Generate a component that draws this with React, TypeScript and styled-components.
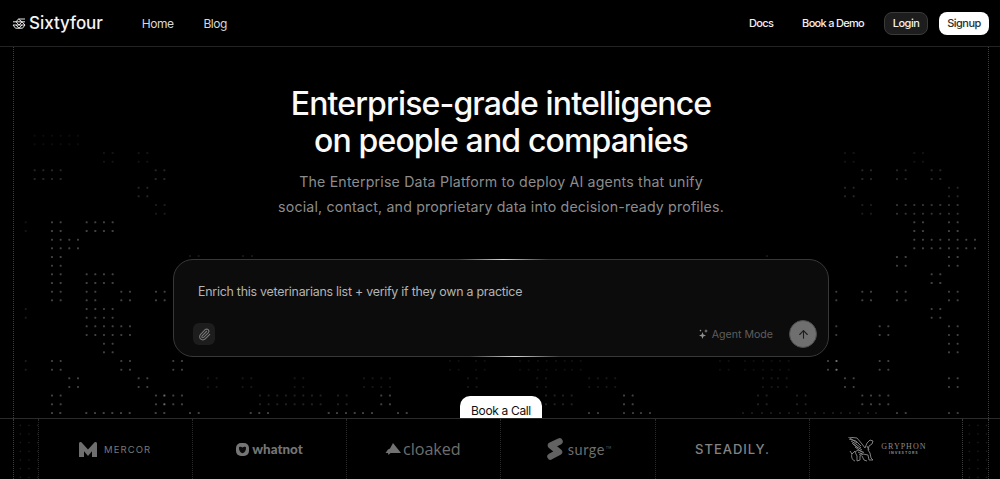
import React from "react";
import styled, { createGlobalStyle } from "styled-components";
import { Paperclip, ArrowUp } from "lucide-react";

const Global = createGlobalStyle`
  html, body { margin: 0; padding: 0; background: #000; height: 100%; overflow: hidden; }
  * { box-sizing: border-box; }
  #root { height: 100%; }
`;

const Page = styled.div`
  position: relative;
  width: 1000px;
  height: 479px;
  display: flex;
  flex-direction: column;
  overflow: hidden;
  background: #000;
  color: #fff;
  font-family: Inter, "Liberation Sans", sans-serif;
`;

const Nav = styled.header`
  position: relative;
  z-index: 1;
  flex: none;
  height: 47px;
  display: flex;
  align-items: center;
  justify-content: space-between;
  padding: 0 11px 0 12px;
  border-bottom: 1px solid #232323;
`;
const NavGroup = styled.div<{ $gap: number }>`
  display: flex;
  align-items: center;
  gap: ${(p) => p.$gap}px;
`;
const Brand = styled.a`
  display: flex;
  align-items: center;
  gap: 3px;
  margin-right: 9px;
  font-size: 17px;
  font-weight: 500;
  letter-spacing: -0.05px;
  color: #f4f4f4;
`;
const NavLink = styled.a<{ $strong?: boolean }>`
  font-size: ${(p) => (p.$strong ? "11px" : "12px")};
  font-weight: ${(p) => (p.$strong ? 500 : 400)};
  letter-spacing: ${(p) => (p.$strong ? "-0.7px" : "-0.5px")};
  color: ${(p) => (p.$strong ? "#f0f0f0" : "#d8d8d8")};
`;
const LoginButton = styled.button`
  width: 44px;
  height: 23px;
  margin-left: -9px;
  padding: 0;
  border: 1px solid #3a3a3a;
  border-radius: 8px;
  background: #1d1d1d;
  color: #f2f2f2;
  font: 500 11px Inter, sans-serif;
  letter-spacing: -0.5px;
`;
const SignupButton = styled.button`
  width: 50px;
  height: 23px;
  margin-left: -18px;
  padding: 0;
  border: 0;
  border-radius: 8px;
  background: #fff;
  color: #2e2e2e;
  font: 500 11px Inter, sans-serif;
  letter-spacing: -0.5px;
`;

const DotMap = styled.svg`
  position: absolute;
  inset: 0;
  pointer-events: none;
`;

const Hero = styled.main`
  position: relative;
  z-index: 1;
  flex: 1;
  min-height: 0;
  margin: 0 11px 0 13px;
  padding-top: 38px;
  display: flex;
  flex-direction: column;
  align-items: center;
  overflow: hidden;
  border-left: 1px dotted #3d3d3d;
  border-right: 1px dotted #3d3d3d;
`;
const Title = styled.h1`
  margin: 0;
  font-size: 32px;
  line-height: 37px;
  font-weight: 500;
  letter-spacing: -0.86px;
  text-align: center;
  color: #fafafa;
`;
const Subtitle = styled.p`
  margin: 10px 0 0;
  font-size: 14.2px;
  line-height: 25px;
  letter-spacing: 0.17px;
  text-align: center;
  color: #8c8c8c;
`;
const PromptCard = styled.section`
  position: relative;
  flex: none;
  width: 656px;
  height: 98px;
  margin-top: 40px;
  padding: 23px 11px 8px 19px;
  display: flex;
  flex-direction: column;
  justify-content: space-between;
  border: 1px solid #383838;
  border-radius: 20px;
  background: #0c0c0c;
  &::before, &::after {
    content: "";
    position: absolute;
    height: 1px;
    width: 90px;
    background: linear-gradient(90deg, transparent, #d8d8d8, transparent);
  }
  &::before { top: -1px; left: 284px; }
  &::after { bottom: -1px; left: 296px; }
`;
const PromptText = styled.div`
  padding-left: 5px;
  font-size: 12.4px;
  line-height: 18px;
  letter-spacing: -0.24px;
  color: #b4b4b4;
`;
const PromptFooter = styled.div`
  display: flex;
  align-items: center;
  justify-content: space-between;
`;
const AttachButton = styled.button`
  width: 22px;
  height: 22px;
  padding: 0;
  display: grid;
  place-items: center;
  border: 0;
  border-radius: 6px;
  background: #1d1d1d;
  color: #777;
`;
const ModeGroup = styled.div`
  display: flex;
  align-items: center;
`;
const AgentMode = styled.span`
  display: flex;
  align-items: center;
  gap: 4px;
  margin-right: 16px;
  font-size: 10.6px;
  color: #5e5e5e;
`;
const SendButton = styled.button`
  width: 28px;
  height: 28px;
  padding: 0;
  display: grid;
  place-items: center;
  border: 1px solid #4c4c4c;
  border-radius: 50%;
  background: #6f6f6f;
  color: #1c1c1c;
`;
const CallButton = styled.button`
  flex: none;
  width: 82px;
  height: 34px;
  margin-top: 39px;
  padding: 0 0 6px;
  border: 0;
  border-radius: 10px;
  background: #fff;
  color: #111;
  font: 400 12px Inter, sans-serif;
  letter-spacing: -0.35px;
`;

const LogoStrip = styled.section`
  position: relative;
  z-index: 1;
  flex: none;
  height: 61px;
  padding: 0 11px 0 13px;
  display: grid;
  grid-template-columns: 24.5px repeat(6, 1fr) 25.5px;
  border-top: 1px solid #2b2b2b;
`;
const CornerCell = styled.div<{ $side: "left" | "right" }>`
  background-image: radial-gradient(circle, #262626 0.7px, transparent 1px);
  background-size: 8.67px 8.67px;
  background-position: 2px 2px;
  border-${(p) => p.$side}: 1px dotted #3d3d3d;
`;
const LogoCell = styled.div`
  display: flex;
  align-items: center;
  justify-content: center;
  border-left: 1px dotted #2a2a2a;
  color: #717171;
  &:nth-last-child(2) { border-right: 1px dotted #3d3d3d; }
`;
const LogoRow = styled.div<{ $gap: number; $shift?: number }>`
  display: flex;
  align-items: center;
  gap: ${(p) => p.$gap}px;
  transform: translateX(${(p) => p.$shift ?? 0}px);
`;
const MercorName = styled.span`
  font-size: 9.5px;
  letter-spacing: 1.1px;
  font-weight: 400;
  color: #787878;
`;
const WhatnotName = styled.span`
  font-family: Lato, sans-serif;
  font-size: 13.4px;
  font-weight: 900;
  color: #757575;
`;
const CloakedName = styled.span`
  font-family: "Open Sans", sans-serif;
  font-size: 16.2px;
  font-weight: 400;
  letter-spacing: -0.05px;
  color: #6e6e6e;
`;
const SurgeName = styled.span`
  font-family: Lato, sans-serif;
  font-size: 14.5px;
  letter-spacing: 0.5px;
  color: #6e6e6e;
`;
const SurgeMark = styled.sup`
  font-size: 3px;
  margin-left: 1px;
`;
const SteadilyName = styled.span`
  font-size: 13px;
  font-weight: 500;
  letter-spacing: 1px;
  color: #838383;
`;
const GryphonText = styled.div`
  display: flex;
  flex-direction: column;
  align-items: center;
  font-family: "Liberation Serif", serif;
  color: #8a8a8a;
`;
const GryphonName = styled.span`
  font-size: 8px;
  letter-spacing: 1px;
  line-height: 9px;
`;
const GryphonSub = styled.span`
  font-family: Inter, sans-serif;
  font-size: 3.6px;
  font-weight: 700;
  letter-spacing: 1px;
  line-height: 5px;
`;

const DOT_STEP = 8.67;
const rowY = (r: number) => 135.67 + 17.33 * r;
const c = (...n: number[]) => n.map((v) => v * 17.33);
const rr = (...n: number[]) => n.map((v) => 845 + v * 17.33);
type Cluster = [row: number, opacity: number, xs: number[]];

const clusters: Cluster[] = [
  [0, 0.05, c(2, 3, 4)],
  [1, 0.08, [...c(6, 8), ...rr(0, 4)]],
  [2, 0.15, [...c(2, 3), 155.7, ...rr(1, 3, 5)]],
  [3, 0.15, [...c(8), ...rr(0, 6)]],
  [4, 0.11, [...c(9), ...rr(1)]],
  [4, 0.2, rr(3, 4, 5, 6)],
  [5, 0.26, [...c(3, 5, 6), ...rr(4, 6)]],
  [6, 0.26, [...c(3, 4), ...rr(4, 5, 6, 7)]],
  [7, 0.26, [...c(3), ...rr(3, 6)]],
  [8, 0.26, [...c(3, 5, 6), ...rr(5)]],
  [9, 0.26, [...c(3, 5, 7, 9), ...rr(1, 3, 6)]],
  [10, 0.26, [...c(5, 6), ...rr(5)]],
  [11, 0.26, [...c(5, 6, 7), ...rr(2, 6)]],
  [12, 0.26, [...c(6), ...rr(6)]],
  [13, 0.26, [...c(3, 7, 10), ...rr(2), 828]],
  [13, 0.06, [450, 476, 520, 538, 556, 572, 720, 745, 763, 780]],
  [14, 0.26, [...c(4, 8), ...rr(0, 6)]],
  [14, 0.09, [...c(12, 14, 17, 21, 22, 27, 31, 34, 35), 763, 778]],
  [15, 0.26, [...c(3, 9, 10, 22), ...rr(1, 2), 624]],
  [15, 0.13, [...c(15, 16, 17, 18), 338, 546, 563, 758, 797]],
];
const singles: [x: number, y: number, o: number][] = [
  [836.3, rowY(9), 0.24],
  [836.3, rowY(9) + DOT_STEP, 0.24],
  [836.3, rowY(11), 0.24],
  [836.3, rowY(11) + DOT_STEP, 0.24],
  [836.3, rowY(13), 0.24],
  [836.3, rowY(13) + DOT_STEP, 0.24],
  [25.7, rowY(5), 0.08],
  [25.7, rowY(5) + DOT_STEP, 0.08],
  [25.7, rowY(10), 0.11],
  [25.7, rowY(10) + DOT_STEP, 0.11],
  [25.7, rowY(13), 0.11],
  [25.7, rowY(13) + DOT_STEP, 0.11],
  [164, rowY(15), 0.2],
  [164, rowY(15) + DOT_STEP, 0.2],
  ...[52, 60.3, 86.3, 95, 103.7, 112.3, 121, 129.7, 155.7, 164.3, 190, 198.7, 250.7, 259.3, 268, 328.7, 337, 346, 354.7, 363, 372, 398, 406.7].map(
    (x) => [x, 413, 0.26] as [number, number, number]
  ),
  ...[589, 598, 624, 633, 641, 650, 897, 905.7, 949, 957.7].map((x) => [x, 413, 0.24] as [number, number, number]),
  ...[743, 752, 762, 771, 780, 789, 798, 806, 815, 824, 833, 841, 850, 859, 868, 876].map(
    (x) => [x, 413, 0.1] as [number, number, number]
  ),
  [190, 256, 0.09],
  [198.7, 256, 0.09],
  [243, 256, 0.09],
  [252, 256, 0.09],
  [767, 256, 0.09],
];

function BackgroundDots() {
  const dots: [number, number, number][] = [...singles];
  clusters.forEach(([row, o, xs]) =>
    xs.forEach((x) => {
      const y = rowY(row);
      dots.push([x, y, o], [x + DOT_STEP, y, o], [x, y + DOT_STEP, o], [x + DOT_STEP, y + DOT_STEP, o]);
    })
  );
  return (
    <DotMap width={1000} height={479} viewBox="0 0 1000 479">
      {dots.map(([x, y, o], i) => (
        <rect key={i} x={x - 1} y={y - 1} width={2} height={2} rx={0.6} fill="#fff" opacity={o} />
      ))}
    </DotMap>
  );
}

const BrandMark = () => (
  <svg width="14" height="11" viewBox="0 0 14 11" fill="none" stroke="#e8e8e8" strokeWidth="1">
    <path d="M4 3.800 6.500 1H13M1 3.800h12M1 7h12M1 7l2.500 3.200h7L13 7M4 3.800 7 7l3-3.200L13 7M6.500 1 10 3.800M4 7l3 3.200L10 7" />
  </svg>
);
const SparkleIcon = () => (
  <svg width="9" height="10" viewBox="0 0 9 10" fill="#8f8f8f">
    <path d="M3.500 3 4.400 5.600 7 6.500 4.400 7.400 3.500 10 2.600 7.400 0 6.500 2.600 5.600Z" />
    <path d="M7 0 7.500 1.500 9 2 7.500 2.500 7 4 6.500 2.500 5 2 6.500 1.500Z" />
    <circle cx="1.500" cy="1.600" r="0.8" />
  </svg>
);
const MercorMark = () => (
  <svg width="18" height="15" viewBox="0 0 18 15" fill="#6e6e6e">
    <path d="M0 1.500C0 .6.600 0 1.500 0c.7 0 1.200.3 1.600.9L9 7.500 14.900.9c.4-.6.900-.9 1.600-.9.900 0 1.500.6 1.500 1.500V15h-5V9.200L9 14 5 9.200V15H0Z" />
  </svg>
);
const WhatnotMark = () => (
  <svg width="13" height="13" viewBox="0 0 13 13">
    <rect width="13" height="13" rx="5" fill="#757575" />
    <path d="M3 4.200c1.200-.7 2.300-.5 3.500.2 1.200-.7 2.300-.9 3.500-.2.300 2.600-1 5.300-3.500 6.100C4 9.500 2.700 6.800 3 4.200Z" fill="#0a0a0a" />
  </svg>
);
const CloakedMark = () => (
  <svg width="16" height="12" viewBox="0 0 16 12" fill="#717171">
    <path d="M8 0 16 10H5.500L3.500 12 3 10H0.500L3 6.500 5 5.500Z" />
  </svg>
);
const SurgeLogoMark = () => (
  <svg width="16" height="22" viewBox="0 0 16 22" fill="none" stroke="#626262" strokeWidth="6.500" strokeLinecap="round" strokeLinejoin="round">
    <path d="M12.500 3.500 4 7.500 12 14 3.500 18.500" />
  </svg>
);
const GryphonMark = () => (
  <svg width="28" height="25" viewBox="0 0 28 25" fill="none" stroke="#8c8c8c" strokeWidth="0.9">
    <path d="M0 0 9 1 14 7 17 11M1 2 8 4 13 9M3 4 8 7 13 11M5 7 9 10 14 13M7 10 11 13 14 15M2 1 9 6M4 6 10 11" />
    <path d="M17 11 19 6 22 3 25 4 24 7 21 9 20 13 22 16 23 21 25 23 21 23 20 18 15 17 12 19 12 23 9 24 9 19 7 15" />
    <path d="M7 15 10 13 15 15M4 16C3 20 4 23 7 24M2 14 4 17 7 14M14 19 16 23 19 24M10 15 14 17M11 18 16 15M19 9 21 13" />
  </svg>
);

const logos = [
  <LogoRow $gap={7} key="m"><MercorMark /><MercorName>MERCOR</MercorName></LogoRow>,
  <LogoRow $gap={3} key="w"><WhatnotMark /><WhatnotName>whatnot</WhatnotName></LogoRow>,
  <LogoRow $gap={2} $shift={-1} key="c"><CloakedMark /><CloakedName>cloaked</CloakedName></LogoRow>,
  <LogoRow $gap={5} $shift={1} key="s"><SurgeLogoMark /><SurgeName>surge<SurgeMark>TM</SurgeMark></SurgeName></LogoRow>,
  <LogoRow $gap={0} key="st"><SteadilyName>STEADILY.</SteadilyName></LogoRow>,
  <LogoRow $gap={5} $shift={1} key="g"><GryphonMark /><GryphonText><GryphonName>GRYPHON</GryphonName><GryphonSub>INVESTORS</GryphonSub></GryphonText></LogoRow>,
];

export default function App() {
  return (
    <Page>
      <Global />
      <BackgroundDots />
      <Nav>
        <NavGroup $gap={30}>
          <Brand><BrandMark />Sixtyfour</Brand>
          <NavLink>Home</NavLink>
          <NavLink>Blog</NavLink>
        </NavGroup>
        <NavGroup $gap={29}>
          <NavLink $strong>Docs</NavLink>
          <NavLink $strong>Book a Demo</NavLink>
          <LoginButton>Login</LoginButton>
          <SignupButton>Signup</SignupButton>
        </NavGroup>
      </Nav>
      <Hero>
        <Title>Enterprise-grade intelligence<br />on people and companies</Title>
        <Subtitle>
          The Enterprise Data Platform to deploy AI agents that unify<br />
          social, contact, and proprietary data into decision-ready profiles.
        </Subtitle>
        <PromptCard>
          <PromptText>Enrich this veterinarians list + verify if they own a practice</PromptText>
          <PromptFooter>
            <AttachButton aria-label="Attach"><Paperclip size={13} /></AttachButton>
            <ModeGroup>
              <AgentMode><SparkleIcon />Agent Mode</AgentMode>
              <SendButton aria-label="Send"><ArrowUp size={13} /></SendButton>
            </ModeGroup>
          </PromptFooter>
        </PromptCard>
        <CallButton>Book a Call</CallButton>
      </Hero>
      <LogoStrip>
        <CornerCell $side="left" />
        {logos.map((logo, i) => <LogoCell key={i}>{logo}</LogoCell>)}
        <CornerCell $side="right" />
      </LogoStrip>
    </Page>
  );
}
